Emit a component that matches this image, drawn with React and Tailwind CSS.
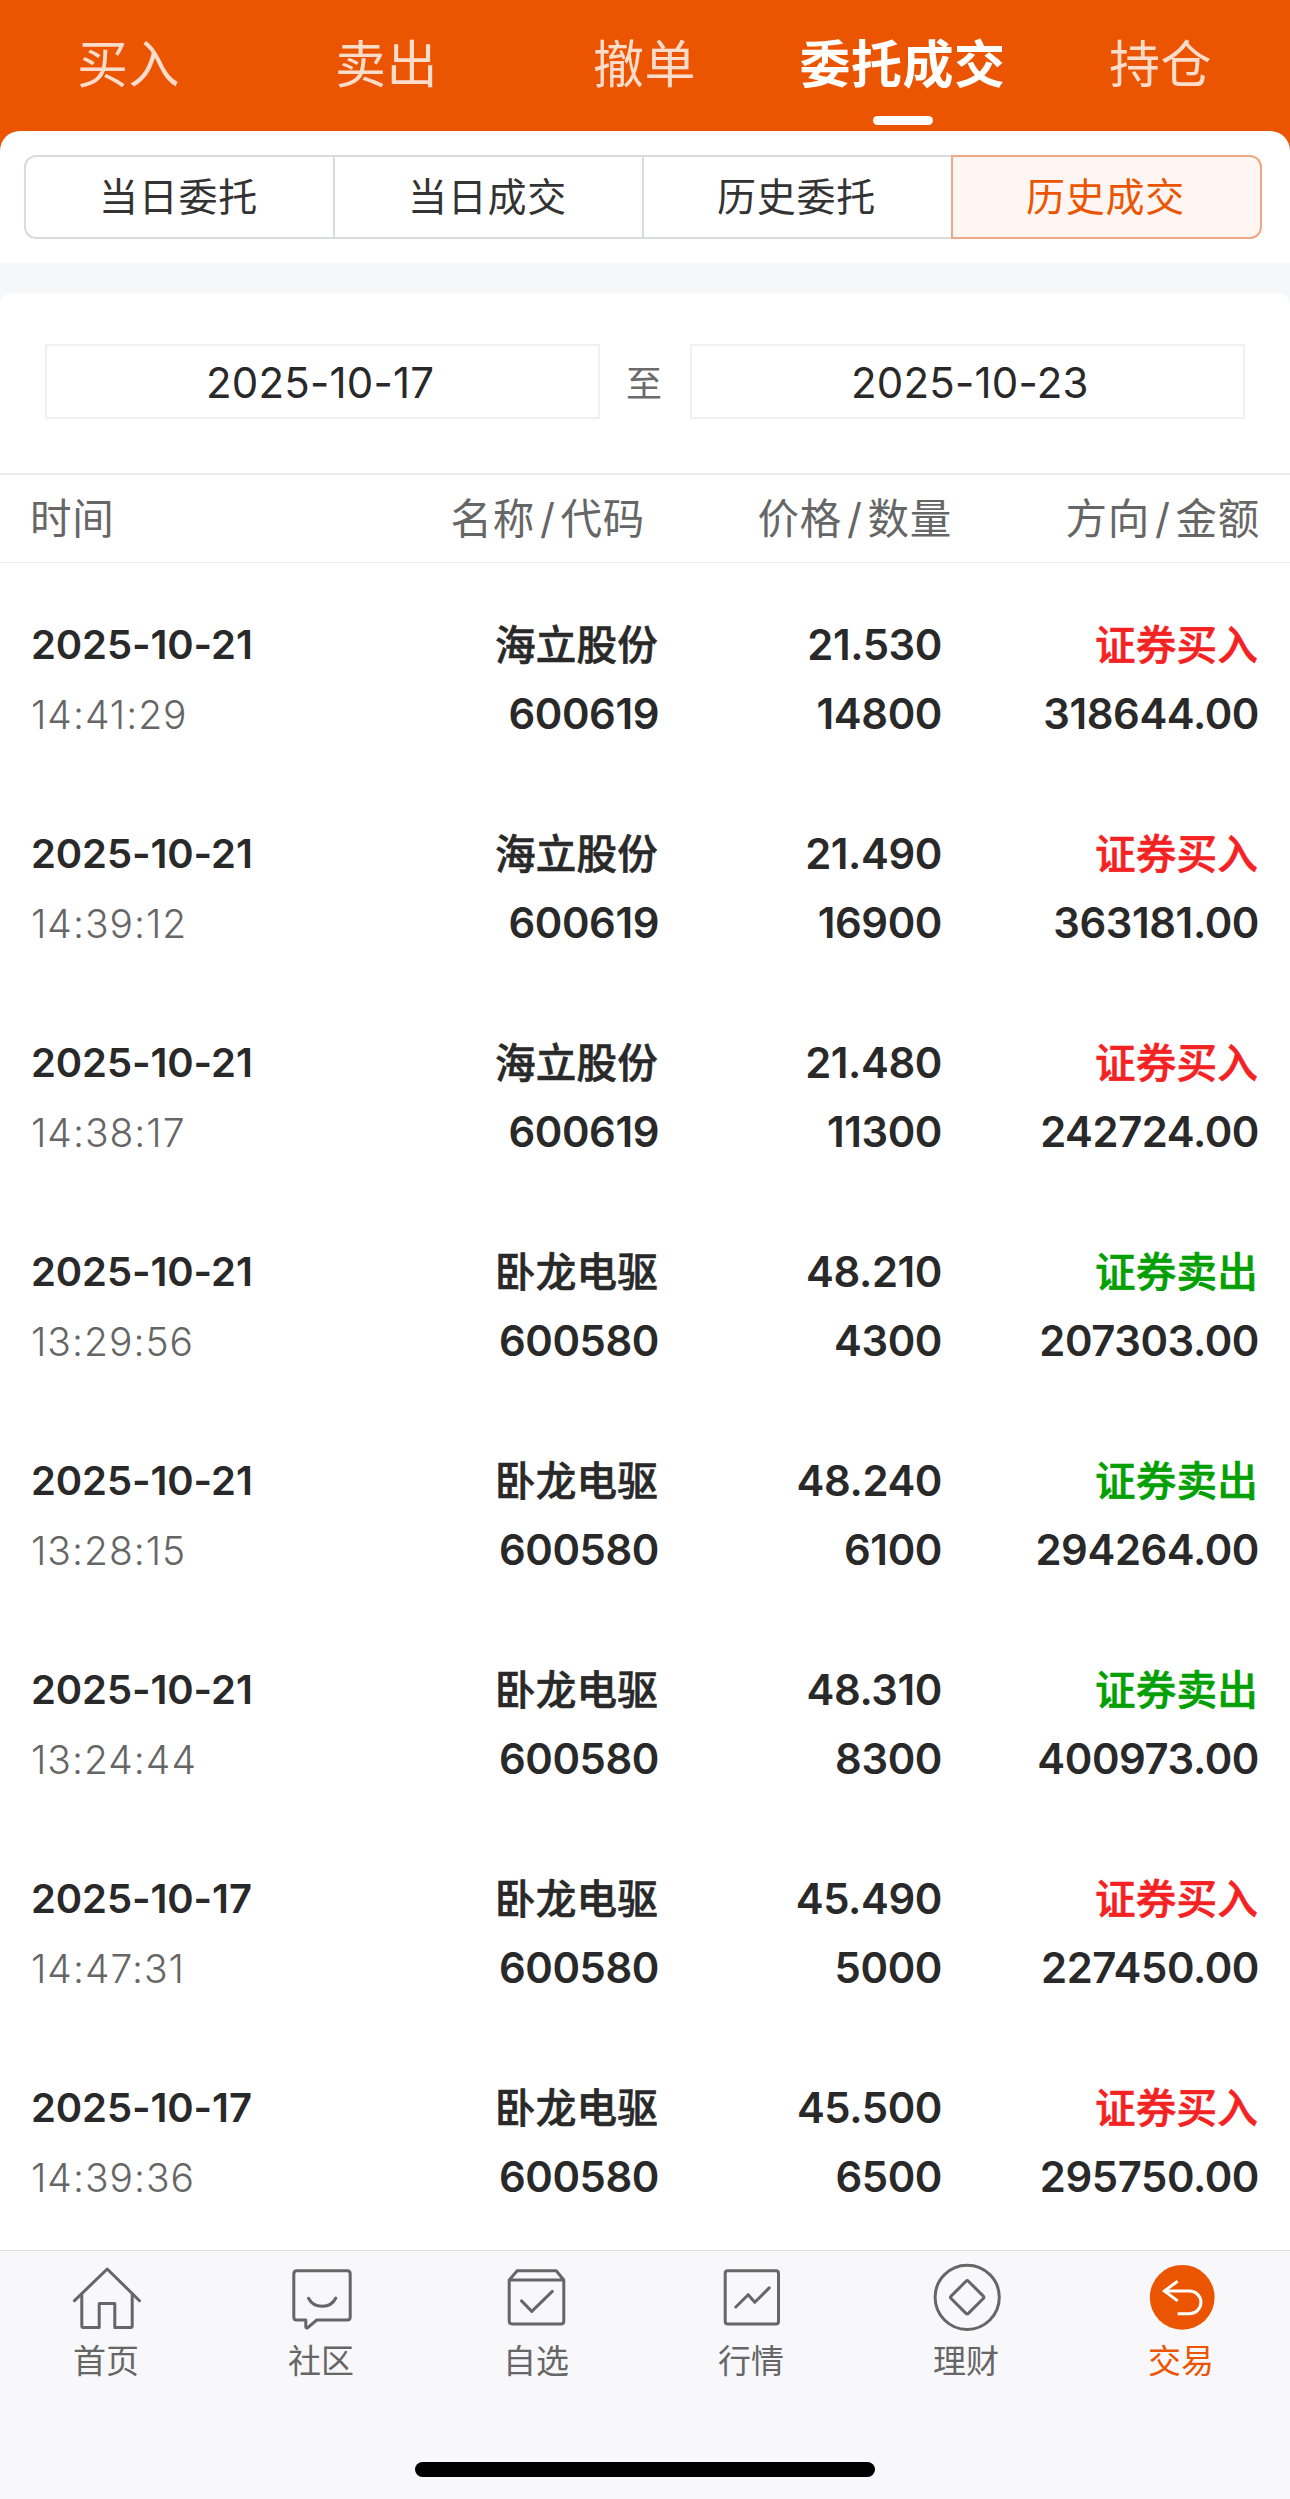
import { useState } from "react";

const MAIN_TABS = ["买入", "卖出", "撤单", "委托成交", "持仓"];
const SUB_TABS = ["当日委托", "当日成交", "历史委托", "历史成交"];

const TRADES = [
  { date: "2025-10-21", time: "14:41:29", name: "海立股份", code: "600619", price: "21.530", qty: "14800", side: "buy", amount: "318644.00" },
  { date: "2025-10-21", time: "14:39:12", name: "海立股份", code: "600619", price: "21.490", qty: "16900", side: "buy", amount: "363181.00" },
  { date: "2025-10-21", time: "14:38:17", name: "海立股份", code: "600619", price: "21.480", qty: "11300", side: "buy", amount: "242724.00" },
  { date: "2025-10-21", time: "13:29:56", name: "卧龙电驱", code: "600580", price: "48.210", qty: "4300", side: "sell", amount: "207303.00" },
  { date: "2025-10-21", time: "13:28:15", name: "卧龙电驱", code: "600580", price: "48.240", qty: "6100", side: "sell", amount: "294264.00" },
  { date: "2025-10-21", time: "13:24:44", name: "卧龙电驱", code: "600580", price: "48.310", qty: "8300", side: "sell", amount: "400973.00" },
  { date: "2025-10-17", time: "14:47:31", name: "卧龙电驱", code: "600580", price: "45.490", qty: "5000", side: "buy", amount: "227450.00" },
  { date: "2025-10-17", time: "14:39:36", name: "卧龙电驱", code: "600580", price: "45.500", qty: "6500", side: "buy", amount: "295750.00" },
];

const NAV_ITEMS = [
  { label: "首页", icon: HomeIcon },
  { label: "社区", icon: CommunityIcon },
  { label: "自选", icon: WatchlistIcon },
  { label: "行情", icon: MarketIcon },
  { label: "理财", icon: WealthIcon },
  { label: "交易", icon: TradeIcon },
];

function Icon({ children }) {
  return (
    <svg
      viewBox="0 0 72 84"
      className="w-[72px] h-[84px] mr-px"
      fill="none"
      stroke="currentColor"
      strokeWidth="3"
      strokeLinecap="round"
      strokeLinejoin="round"
    >
      {children}
    </svg>
  );
}

function HomeIcon() {
  return (
    <Icon>
      <path d="M3.5 49.7 36.2 18 68.5 49.7" />
      <path d="M10.8 44V75Q10.8 76.400 12.2 76.400H28.2V52.500H43.8V76.400H59.800Q61.2 76.400 61.2 75V44" />
    </Icon>
  );
}

function CommunityIcon() {
  return (
    <Icon>
      <path d="M10.800 19.700H61.200Q64.200 19.700 64.200 22.700V66Q64.200 69 61.200 69H30.800L21.500 76.800Q19.800 77.600 19.800 75.500V69H10.800Q7.800 69 7.800 66V22.700Q7.800 19.700 10.800 19.700Z" />
      <path d="M22.500 47.300C28 58 44.500 58 49.800 47" />
    </Icon>
  );
}

function WatchlistIcon() {
  return (
    <Icon>
      <path d="M8.200 29 16.200 19.700H55.200L62.800 29V70Q62.800 73 59.800 73H11.200Q8.200 73 8.200 70V29H62.800" />
      <path d="M20.500 49.900 30.800 60.400 51.300 40.400" />
    </Icon>
  );
}

function MarketIcon() {
  return (
    <Icon>
      <rect x="9.200" y="19.700" width="53.300" height="53.300" rx="2.500" />
      <path d="M19.800 56 32.200 43.700 38.800 51.300 53.200 36.900" />
    </Icon>
  );
}

function WealthIcon() {
  return (
    <Icon>
      <circle cx="36.200" cy="46.300" r="32.100" />
      <path d="M35 30.200Q36.200 29 37.400 30.200L52.300 45.100Q53.500 46.300 52.300 47.500L37.400 62.400Q36.200 63.600 35 62.400L20.100 47.500Q18.900 46.300 20.100 45.100Z" />
    </Icon>
  );
}

function TradeIcon() {
  return (
    <Icon>
      <circle cx="36.200" cy="46.300" r="32.400" fill="#eb5502" stroke="none" />
      <g stroke="#fff" strokeWidth="3" strokeLinecap="butt" strokeLinejoin="miter">
        <path d="M31.600 30.200 18.400 40 31.600 49.900" />
        <path d="M18.400 40H43.600A11.350 11.350 0 0 1 43.600 62.700H31.600" />
      </g>
    </Icon>
  );
}

function DateBox({ value }) {
  return (
    <button className="w-[555px] h-[75px] pt-[2px] pl-[159px] border-2 border-[#f0f0f0] text-[42px] leading-none text-left tracking-[0.200px] text-[#292929] flex items-center">
      {value}
    </button>
  );
}

function HeadCell({ className, left, right }) {
  return (
    <span className={className}>
      {left}
      {right && <span className="mx-[5px]">/</span>}
      {right}
    </span>
  );
}

function TradeRow({ trade }) {
  const buy = trade.side === "buy";
  return (
    <div className="h-[209px] pt-12 pl-[31px] pr-[31px] flex text-[41.800px] leading-[69px] tracking-[-0.400px] font-semibold text-[#292929] text-right whitespace-nowrap">
      <div className="w-[240px] text-left">
        <div className="-mt-px mb-px text-[40px] tracking-[-0.100px]">{trade.date}</div>
        <div className="text-[39px] font-light tracking-[1px] text-[#666]">{trade.time}</div>
      </div>
      <div className="w-[388px]">
        <div className="pr-px text-[40.600px] tracking-[0.200px] font-medium [-webkit-text-stroke:0.6px_currentColor]">{trade.name}</div>
        <div>{trade.code}</div>
      </div>
      <div className="w-[283px]">
        <div>{trade.price}</div>
        <div>{trade.qty}</div>
      </div>
      <div className="flex-1">
        <div className={`pr-px text-[40.600px] tracking-[0.200px] font-medium [-webkit-text-stroke:0.6px_currentColor] ${buy ? "text-[#f42222]" : "text-[#03a003]"}`}>
          {buy ? "证券买入" : "证券卖出"}
        </div>
        <div>{trade.amount}</div>
      </div>
    </div>
  );
}

export default function App() {
  const [mainTab, setMainTab] = useState("委托成交");
  const [subTab, setSubTab] = useState("历史成交");
  const [navTab, setNavTab] = useState("交易");

  return (
    <div className="w-[1290px] h-[2499px] overflow-hidden flex flex-col bg-white font-['Inter','Noto_Sans_CJK_SC',sans-serif]">
      {/* Main tabs + sub tabs */}
      <div className="bg-[#eb5502]">
        <div className="h-[131px] grid grid-cols-5">
          {MAIN_TABS.map((tab) => (
            <button
              key={tab}
              onClick={() => setMainTab(tab)}
              className={`relative h-[130px] pr-px text-[51px] leading-[130px] tracking-[0.500px] whitespace-nowrap ${
                mainTab === tab ? "text-white font-bold" : "text-[#fddccb]"
              }`}
            >
              {tab}
              {mainTab === tab && (
                <span className="absolute left-1/2 -translate-x-1/2 top-[116px] w-[60px] h-[9px] rounded-full bg-white" />
              )}
            </button>
          ))}
        </div>
        <div className="h-[132px] px-6 pt-6 bg-white rounded-t-[20px]">
          <div className="w-[1238px] h-[84px] flex">
            {SUB_TABS.map((tab) => (
              <button
                key={tab}
                onClick={() => setSubTab(tab)}
                className={`flex-1 pr-[2px] pb-[2px] border-y-2 border-l-2 last:border-r-2 first:rounded-l-xl last:rounded-r-xl text-[39px] leading-none tracking-[0.700px] ${
                  subTab === tab
                    ? "border-[#efa785] bg-[#fff5f2] text-[#eb5502]"
                    : "border-[#d9dbe0] text-[#333]"
                }`}
              >
                {tab}
              </button>
            ))}
          </div>
        </div>
      </div>

      {/* Date range */}
      <div className="bg-[#f6f7f9] pt-[30px]">
        <div className="h-[180px] px-[45px] pt-[51px] flex bg-white rounded-t-xl">
          <DateBox value="2025-10-17" />
          <span className="w-[90px] h-[75px] pr-[2px] text-center text-[36px] leading-[80px] text-[#6b6b6b]">至</span>
          <DateBox value="2025-10-23" />
        </div>
      </div>

      {/* Table head */}
      <div className="h-[90px] shrink-0 pl-[30px] pr-[30px] border-t-2 border-b border-[#ebebeb] flex text-[41.500px] leading-[88px] tracking-[0.700px] text-[#666] text-right whitespace-nowrap">
        <HeadCell className="w-[240px] text-left" left="时间" />
        <HeadCell className="w-[375px]" left="名称" right="代码" />
        <HeadCell className="w-[307px]" left="价格" right="数量" />
        <HeadCell className="flex-1" left="方向" right="金额" />
      </div>

      <div className="flex-1">
        {TRADES.map((trade) => (
          <TradeRow key={`${trade.date} ${trade.time}`} trade={trade} />
        ))}
      </div>

      {/* Bottom navigation */}
      <div className="h-[249px] shrink-0 bg-[#f8f8fb] border-t border-[#dcdce3] flex flex-col items-center">
        <div className="w-full h-[211px] grid grid-cols-6">
          {NAV_ITEMS.map(({ label, icon: NavIcon }) => (
            <button
              key={label}
              onClick={() => setNavTab(label)}
              className={`flex flex-col items-center justify-start ${
                navTab === label ? "text-[#eb5502]" : "text-[#666]"
              }`}
            >
              <NavIcon />
              <span className="pr-[3px] pt-[2px] text-[33px] leading-[48px]">{label}</span>
            </button>
          ))}
        </div>
        <div className="w-[460px] h-[15px] rounded-full bg-black" />
      </div>
    </div>
  );
}
